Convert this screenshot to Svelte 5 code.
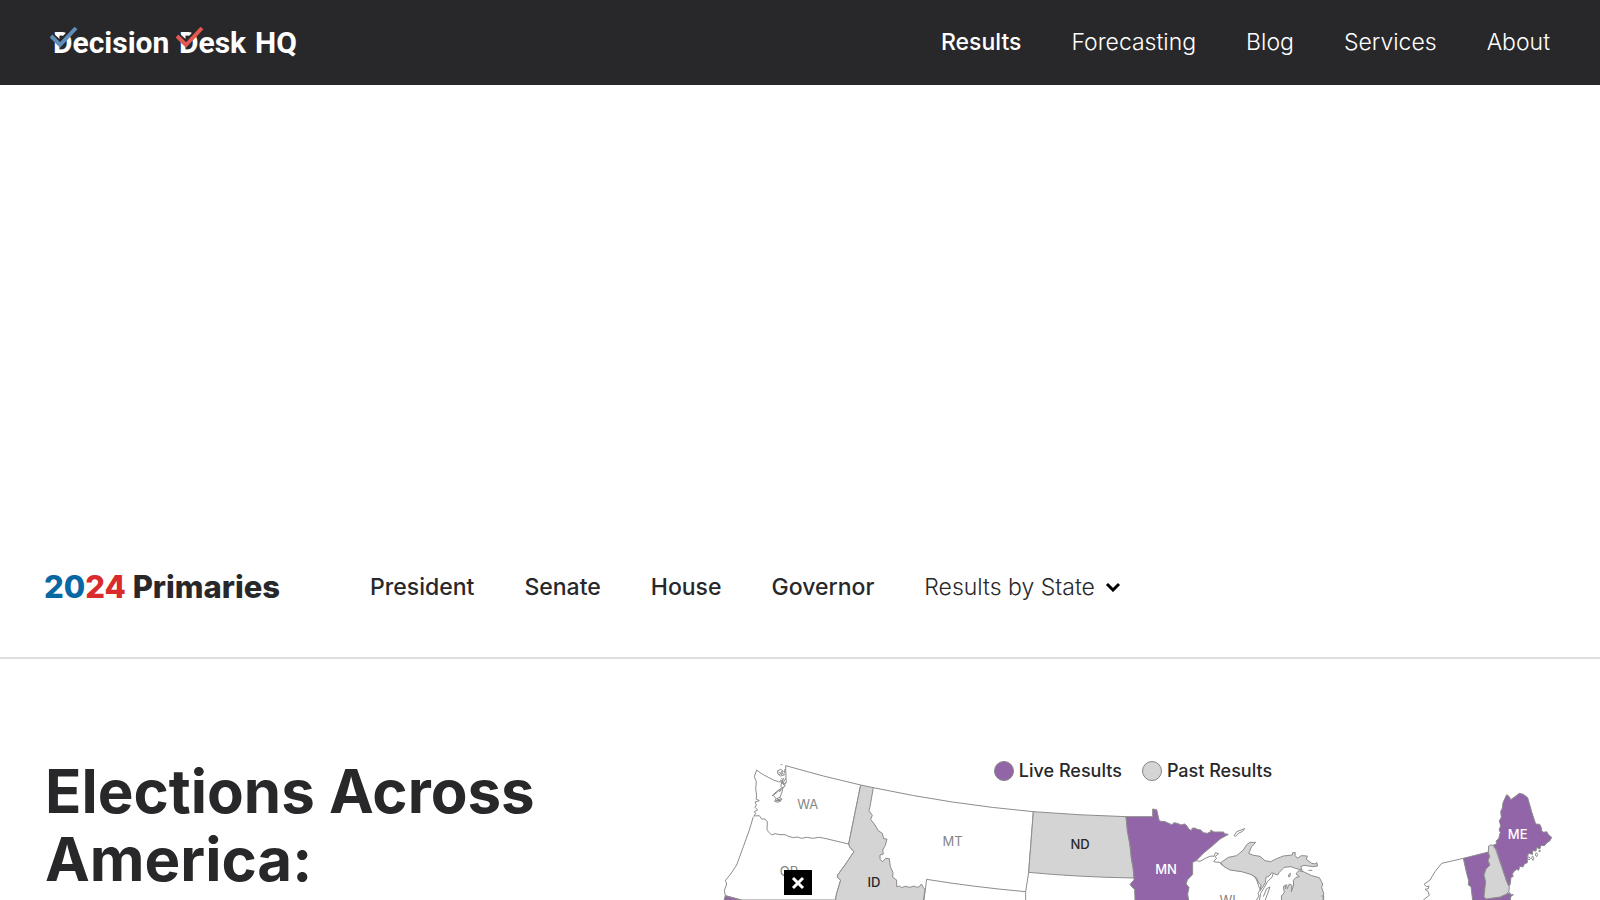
<script>
  const siteLinks = ['Results', 'Forecasting', 'Blog', 'Services', 'About'];
  const raceLinks = ['President', 'Senate', 'House', 'Governor'];
  let adOpen = $state(true);
</script>

<header class="site">
  <a class="logo" href="#home" aria-label="Decision Desk HQ">
    <svg viewBox="0 0 252 36" width="252" height="36">
      <g class="wordmark">
        <text x="3" y="29">Decision</text>
        <text x="129" y="29">Desk</text>
        <text x="205" y="29">HQ</text>
      </g>
      <g fill="none">
        <path class="gap" d="M1 10 10 18 25 2" />
        <path class="blue" d="M1 12 10 21 26 4" />
        <path class="gap" d="M127 10 136 18 151 2" />
        <path class="red" d="M127 12 136 21 152 4" />
      </g>
    </svg>
  </a>
  <nav class="links" aria-label="Site">
    {#each siteLinks as label, i}
      <a href="#{label.toLowerCase()}" class:active={i === 0}>{label}</a>
    {/each}
  </nav>
</header>

<section class="ad" aria-label="Advertisement"></section>

<div class="races">
  <h2><span class="y1">20</span><span class="y2">24</span> Primaries</h2>
  <nav class="links" aria-label="Races">
    {#each raceLinks as label}
      <a class="race" href="#{label.toLowerCase()}">{label}</a>
    {/each}
    <button class="states" type="button">
      Results by State
      <svg viewBox="0 0 16 10" width="16" height="10"><path d="M2 2 8 8 14 2" /></svg>
    </button>
  </nav>
</div>

<main>
  <h1>Elections Across America:</h1>
  <figure>
    <svg class="map" viewBox="0 0 2538 450" role="img" aria-label="Map of states">
      <g>
        <path class="plain" d="M140 60 150 68 160 74 175 82 190 90 205 95 220 97 228 85 227 47 340 78 452 105 416 282 340 264 325 262 310 265 290 262 275 265 262 261 250 263 235 259 225 254 210 254 195 251 185 255 175 245 171 238 172 215 165 207 155 207 148 197 132 198 137 190 133 185 143 180 135 172 139 165 135 156 148 152 138 147 140 135 137 118 139 95 133 80Z" />
        <path class="plain" d="M202 63 212 58 220 64 215 70 224 74 212 78 204 72ZM206 66 216 74M208 75 218 61M212 44h5M224 58v12M220 98 226 106 218 116 212 108 217 94M222 84 216 92 222 102 230 98M214 84 220 90 214 98 224 106M226 84 230 92 226 100M210 90 218 94M218 112 216 126 210 142 216 148 204 157 194 154 198 146 190 136 203 125 213 116 200 124 186 138M210 142 200 146 211 151 198 152 214 146M196 150 212 154M220 110 208 126" />
        <path class="plain" d="M130 200 118 240 100 290 80 345 62 372 46 392 50 402 43 422 46 437 95 450 376 450 380 430 392 390 382 382 383 375 405 345 415 330 432 305 420 292 416 282" />
        <path class="live" d="M46 437 95 451 42 451Z" />
        <path class="plain" d="M490 113Q724 163 970 185L956 367 947 425Q790 411 650 388L642 450" />
        <path class="past" d="M452 105 490 113 480 170 477 182 487 196 482 208 495 225 505 242 517 250 521 266 531 267 526 286 518 300 520 312 510 315 510 328 518 335 527 325 538 326 541 350 549 368 548 382 560 390 560 410 568 408 575 413 585 409 600 412 612 408 620 412 628 410 634 402 640 412 645 418 640 452 376 452 380 430 392 390 382 382 383 375 405 345 415 330 432 305 420 292 416 282Z" />
        <path class="plain" d="M947 425V452" />
        <path class="past" d="M970 185Q1110 196 1248 200L1254 240 1260 290 1265 330 1270 360 1272 384Q1100 381 956 367Z" />
        <text class="muted" x="293" y="178">WA</text>
        <text class="muted" x="237" y="379">OR</text>
        <text x="492" y="411">ID</text>
        <text class="muted" x="728" y="288">MT</text>
        <text x="1110" y="298">ND</text>
      </g>
      <g transform="translate(1170)">
        <path class="live" d="M78 200H158V177L170 179 178 213 195 215 202 218 215 224 223 218 235 221 243 225 254 222 261 228 266 237 275 242 276 235 285 234 291 238 302 240 310 248 322 250 334 244 332 240 342 246 371 246 373 251 385 253 360 267 340 285 310 310 288 332 278 337 278 373 262 390 258 402 267 412 263 432 266 452H105L104 418 97 412 90 403 102 390 102 382 99 350 94 325 91 288 82 245Z" />
        <path class="plain" d="M402 257 410 245 434 236 428 244 415 250 407 259ZM288 332 300 334 320 323 333 318 342 319 346 308 356 311 345 320 350 325 341 334 345 336 360 337 364 344 380 352 410 362 440 366 462 378 470 390 475 405 479 416 486 410 474 430 477 438 468 452M520 370 516 382 503 394 493 412 482 430 478 452M495 452 510 411 500 416 490 440M566 374 571 370 570 380 565 380Z" />
        <path class="past" d="M362 338 385 322 410 317 430 300 440 284 450 277 467 277 455 290 446 310 460 316 480 319 495 332 512 335 530 326 550 318 577 315 578 308 586 308 585 316 592 325 604 317 622 318 619 328 635 340 646 342 650 337 653 348 640 350 612 346 602 350 606 360 586 355 573 350 552 352 538 367 533 375 515 368 508 378 498 382 496 398 489 410 480 422 483 405 475 398 470 384 455 374 425 365 390 360 372 350Z" />
        <path class="past" d="M596 362 610 365 635 377 658 383 668 402 665 412 671 430 669 452H545L544 438 553 428 550 410 560 404 562 416 568 402 576 406 574 425 581 405 580 391 588 382 598 380 588 372Z" />
        <path class="plain" d="M602 363h8M625 361h12M664 438h7V452M555 405l2 12" />
        <text class="light" x="198" y="373">MN</text>
        <text class="muted" x="383" y="465">WI</text>
      </g>
      <g transform="translate(2070)">
        <path class="plain" d="M190 325 125 340 105 365 90 390 72 403 80 410 87 408 85 416 75 418 84 424 88 436 70 450" />
        <path class="live" d="M190 325 265 306 269 320 264 332 270 345 258 357 252 375 257 395 253 430 257 452H218L213 410 205 405 206 392 200 370 195 348Z" />
        <path class="live" d="M254 452 258 446 300 442 320 432 330 428 331 434 340 434 332 440 331 452Z" />
        <path class="live" d="M320 134 328 140 332 149 345 140 358 130 370 133 383 143 395 185 407 222 419 223 425 235 424 241 431 247 440 245 446 255 455 262 450 272 441 278 433 287 423 286 420 296 410 293 408 303 397 302 398 313 386 310 382 320 382 338 373 342 369 351 359 349 356 361 350 358 341 365 337 373 340 379 333 382 330 405 325 409 320 395 305 350 290 300 279 286 290 281 288 273 296 266 301 247 297 240 302 228 298 212 304 202 302 185 307 174 309 158Z" />
        <path class="past" d="M265 306 266 288 272 285 279 286 287 298 305 350 320 395 328 411 327 423 320 432 300 441 258 447 252 440 257 395 252 375 258 357 270 345 264 332 269 320Z" />
        <path class="plain" d="M386 320l5 5-4 5-4-5zM397 318l5 5-3 8-4-6zM409 308l4 5-3 7-4-5zM418 299l4 4-5 3z" />
        <text class="light" x="353" y="267">ME</text>
      </g>
    </svg>
    <figcaption>
      <span class="key"><i class="dot on"></i>Live Results</span>
      <span class="key"><i class="dot"></i>Past Results</span>
    </figcaption>
  </figure>
</main>

{#if adOpen}
  <button class="close" type="button" aria-label="Close" onclick={() => (adOpen = false)}>
    <svg viewBox="0 0 14 14" width="14" height="14"><path d="M2 2 12 12M12 2 2 12" /></svg>
  </button>
{/if}

<style>
  :global(body) {
    margin: 0;
    background: #fff;
    color: #28282a;
    font-family: Inter, 'Liberation Sans', sans-serif;
  }
  .site {
    display: flex;
    align-items: center;
    justify-content: space-between;
    box-sizing: border-box;
    height: 85px;
    padding: 0 50px 2px;
    background: #28282a;
  }
  .logo,
  .logo svg {
    display: block;
  }
  .wordmark {
    fill: #fff;
    font-family: Roboto, sans-serif;
    font-weight: 700;
    font-size: 30px;
  }
  .gap {
    stroke: #28282a;
    stroke-width: 4;
  }
  .blue,
  .red {
    stroke: #5f8fb8;
    stroke-width: 4;
  }
  .red {
    stroke: #e0584f;
  }
  .links {
    display: flex;
    align-items: center;
    gap: 50px;
    font-size: 23px;
    line-height: 32px;
    font-weight: 300;
  }
  a {
    color: inherit;
    text-decoration: none;
  }
  .site .links {
    color: #fff;
  }
  .links .active {
    font-weight: 500;
  }
  .ad {
    height: 440px;
  }
  .races {
    display: flex;
    align-items: center;
    gap: 90px;
    box-sizing: border-box;
    height: 134px;
    padding: 0 44px 8px;
    border-bottom: 2px solid #dedede;
  }
  h1,
  h2,
  figure {
    margin: 0;
  }
  h2 {
    font-size: 31px;
    line-height: 40px;
    font-weight: 800;
  }
  .y1 {
    color: #0868a2;
  }
  .y2 {
    color: #d92b2b;
  }
  .race {
    font-weight: 500;
  }
  .states {
    display: flex;
    align-items: center;
    gap: 10px;
    padding: 0;
    border: 0;
    background: none;
    color: inherit;
    font: inherit;
  }
  .states path {
    fill: none;
    stroke: #000;
    stroke-width: 3;
  }
  main {
    display: grid;
    grid-template-columns: minmax(0, 665fr) minmax(0, 846fr);
    padding: 91px 44px 0 45px;
  }
  h1 {
    padding-top: 7px;
    max-width: 600px;
    font-size: 60px;
    line-height: 68px;
    font-weight: 700;
  }
  figure {
    display: grid;
    align-items: start;
  }
  .map,
  figcaption {
    grid-area: 1 / 1;
  }
  .map {
    display: block;
    width: 100%;
  }
  .map path {
    stroke: #8c8c8c;
    stroke-width: 3;
    stroke-linejoin: round;
  }
  .map .plain {
    fill: none;
  }
  .map .live {
    fill: #9264a8;
  }
  .map .past {
    fill: #d4d4d4;
  }
  .map text {
    fill: #28282a;
    font-size: 39px;
    font-weight: 500;
    text-anchor: middle;
  }
  .map .muted {
    fill: #858585;
    font-weight: 400;
  }
  .map .light {
    fill: #fff;
  }
  figcaption {
    display: flex;
    justify-content: center;
    gap: 20px;
    padding-top: 9px;
    font-size: 18px;
    line-height: 24px;
    font-weight: 500;
  }
  .key {
    display: flex;
    align-items: center;
    gap: 5px;
  }
  .dot {
    box-sizing: border-box;
    width: 20px;
    height: 20px;
    border: 1px solid #858585;
    border-radius: 50%;
    background: #d4d4d4;
  }
  .dot.on {
    background: #9264a8;
  }
  .close {
    position: fixed;
    bottom: 5px;
    left: 49%;
    display: grid;
    place-items: center;
    width: 28px;
    height: 25px;
    padding: 0;
    border: 0;
    background: #000;
  }
  .close path {
    stroke: #fff;
    stroke-width: 3;
  }
</style>
